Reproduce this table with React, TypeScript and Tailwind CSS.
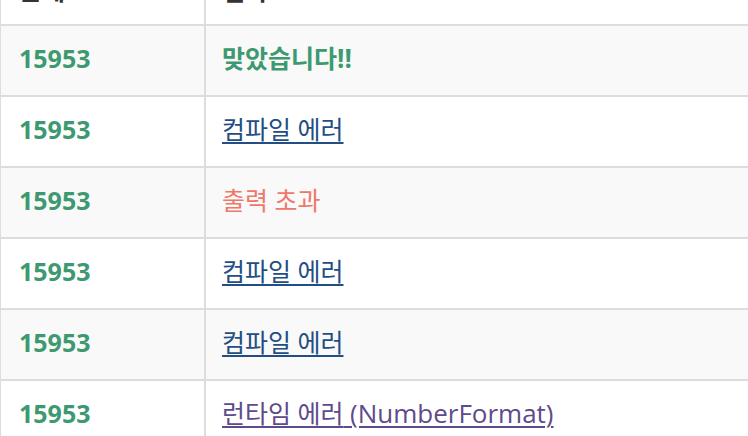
import React from 'react';

type Row = {
    problem: string;
    kind: 'ac' | 'ce' | 'ole' | 'rte';
    label: string;
    detail?: string;
};

const rows: Row[] = [
    { problem: '15953', kind: 'ac', label: '맞았습니다' },
    { problem: '15953', kind: 'ce', label: '컴파일 에러' },
    { problem: '15953', kind: 'ole', label: '출력 초과' },
    { problem: '15953', kind: 'ce', label: '컴파일 에러' },
    { problem: '15953', kind: 'ce', label: '컴파일 에러' },
    { problem: '15953', kind: 'rte', label: '런타임 에러', detail: '(NumberFormat)' },
];

const ko = 'text-[25px]';

const Result: React.FC<{ row: Row }> = ({ row }) => {
    if (row.kind === 'ac') {
        return (
            <span className="font-bold text-[#3d9970]">
                <span className={ko}>{row.label}</span>!!
            </span>
        );
    }
    if (row.kind === 'ole') {
        return (
            <span className="text-[#ef786a]">
                <span className={ko}>{row.label}</span>
            </span>
        );
    }
    const color = row.kind === 'ce' ? 'text-[#234e84]' : 'text-[#5e4b8b]';
    return (
        <a href="#" className={`${color} underline decoration-2 underline-offset-[3px]`}>
            <span className={ko}>{row.label} </span>
            {row.detail}
        </a>
    );
};

export default function App() {
    return (
        <div className="h-[436px] w-[748px] overflow-hidden bg-white font-['Open_Sans','Noto_Sans_CJK_KR',sans-serif] text-[26px] leading-[37px]">
            <div className="-mt-[46px] w-[780px]">
                {/* header row, mostly scrolled off the top */}
                <div className="flex bg-white font-bold text-[#333]">
                    <div className="flex h-[71px] w-[205px] items-end border border-[#ddd] pl-[18px] pb-[15px]">
                        <span className={ko}>문제</span>
                    </div>
                    <div className="flex h-[71px] flex-1 items-end border border-[#ddd] pl-4 pb-[15px]">
                        <span className={ko}>결과</span>
                    </div>
                </div>

                {rows.map((row, i) => (
                    <div key={i} className={`flex ${i % 2 === 0 ? 'bg-[#f9f9f9]' : 'bg-white'}`}>
                        <div className="flex h-[71px] w-[205px] items-center border border-[#ddd] pb-1 pl-[18px] text-[25px] font-bold text-[#3d9970]">
                            {row.problem}
                        </div>
                        <div className="flex h-[71px] flex-1 items-center border border-[#ddd] pb-1 pl-4">
                            <Result row={row} />
                        </div>
                    </div>
                ))}
            </div>
        </div>
    );
}
